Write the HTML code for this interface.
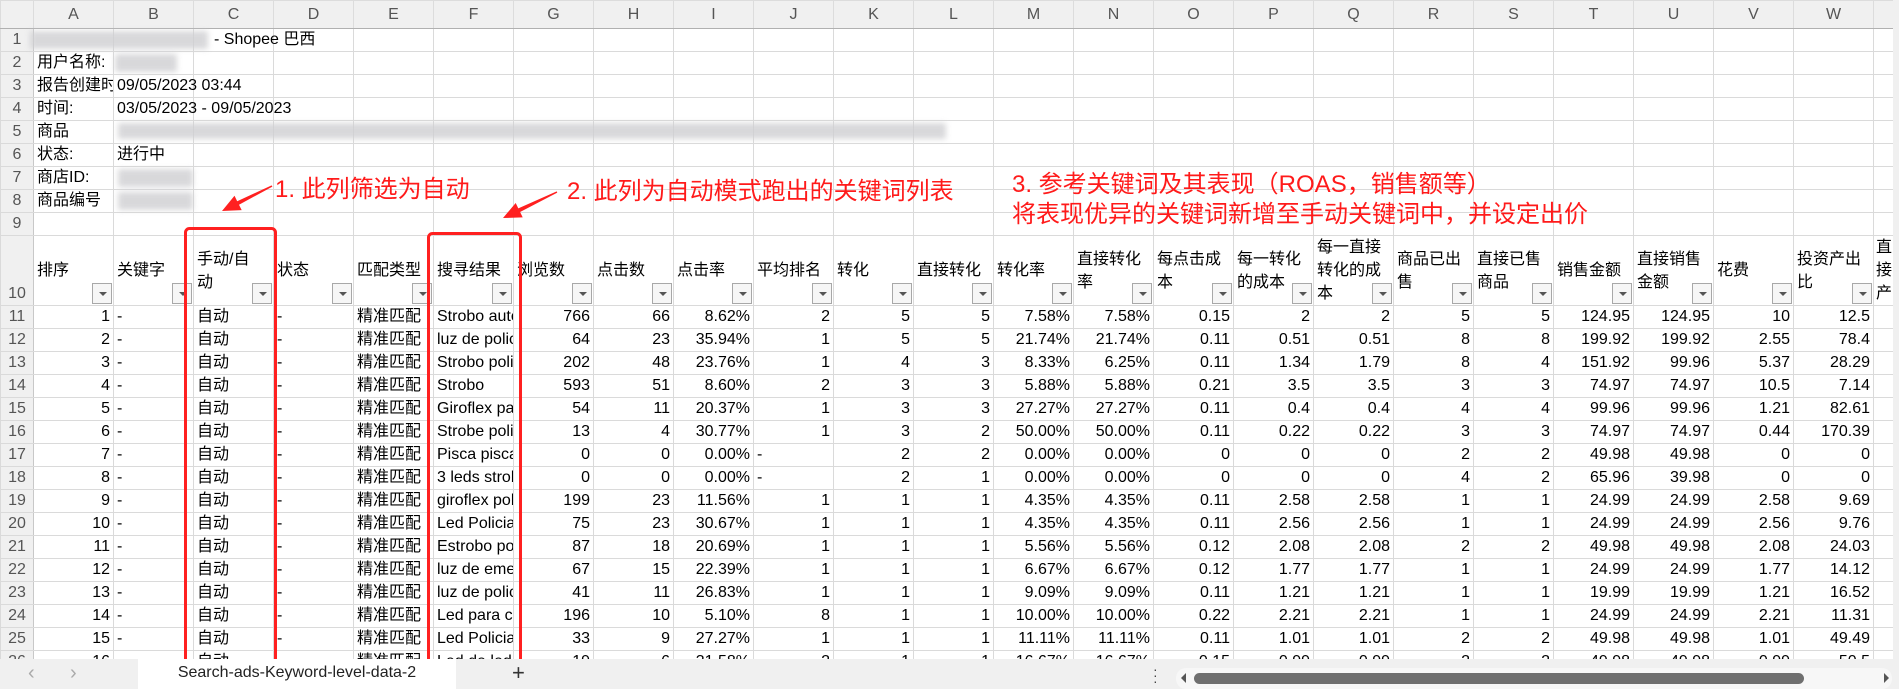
<!DOCTYPE html>
<html><head><meta charset="utf-8">
<style>
*{margin:0;padding:0;box-sizing:border-box}
body{width:1899px;height:689px;overflow:hidden;background:#fff;font-family:"Liberation Sans","Noto Sans CJK SC",sans-serif;font-size:16px;color:#000;position:relative}
table{border-collapse:collapse;table-layout:fixed;position:absolute;left:0;top:0;width:1893px}
td{border:1px solid #dadada;white-space:nowrap;overflow:hidden;padding:0 3px;height:23px;line-height:20px;vertical-align:middle}
tr.ch td{background:#f0f0f0;color:#555;text-align:center;font-size:16px;height:28px;border-color:#dcdcdc;border-bottom:1px solid #b0b0b0}
td.rh{background:#f0f0f0;color:#555;text-align:center;font-size:16px;padding:0;border-right:1px solid #c8c8c8}
td.r{text-align:right}
td.ov{overflow:visible}
tr.h10 td{height:68px;white-space:normal;line-height:23px;position:relative;vertical-align:middle;padding-right:3px;font-size:16px;word-break:break-all}
tr.h10 td.rh{vertical-align:bottom;padding:0}
.fb{position:absolute;right:1px;bottom:1px;width:20px;height:21px;background:#f6f6f6;border:1px solid #a8a8a8}
.fb:after{content:"";position:absolute;left:6px;top:8px;border-left:4px solid transparent;border-right:4px solid transparent;border-top:4px solid #555}
.blur{position:absolute;background:#cfcfd2;filter:blur(3px);opacity:.8}
.ann{position:absolute;color:#ff1a1a;font-size:24px;line-height:30px;white-space:nowrap;font-family:"Liberation Sans","Noto Sans CJK SC",sans-serif}
.tabbar{position:absolute;left:0;top:659px;width:1899px;height:30px;background:#f0f0f0}
.vs{position:absolute;left:1893px;top:0;width:6px;height:659px;background:#f0f0f0}
</style></head><body>
<table>
<colgroup><col style="width:33px"><col span="23" style="width:80px"><col style="width:20px"></colgroup>
<tr class="ch"><td style="background:#f0f0f0"></td><td>A</td><td>B</td><td>C</td><td>D</td><td>E</td><td>F</td><td>G</td><td>H</td><td>I</td><td>J</td><td>K</td><td>L</td><td>M</td><td>N</td><td>O</td><td>P</td><td>Q</td><td>R</td><td>S</td><td>T</td><td>U</td><td>V</td><td>W</td><td></td></tr>
<tr><td class="rh">1</td><td></td><td></td><td class="ov"></td><td></td><td></td><td></td><td></td><td></td><td></td><td></td><td></td><td></td><td></td><td></td><td></td><td></td><td></td><td></td><td></td><td></td><td></td><td></td><td></td><td></td></tr>
<tr><td class="rh">2</td><td>用户名称:</td><td></td><td></td><td></td><td></td><td></td><td></td><td></td><td></td><td></td><td></td><td></td><td></td><td></td><td></td><td></td><td></td><td></td><td></td><td></td><td></td><td></td><td></td><td></td></tr>
<tr><td class="rh">3</td><td>报告创建时间</td><td class="ov">09/05/2023 03:44</td><td></td><td></td><td></td><td></td><td></td><td></td><td></td><td></td><td></td><td></td><td></td><td></td><td></td><td></td><td></td><td></td><td></td><td></td><td></td><td></td><td></td><td></td></tr>
<tr><td class="rh">4</td><td>时间:</td><td class="ov">03/05/2023 - 09/05/2023</td><td></td><td></td><td></td><td></td><td></td><td></td><td></td><td></td><td></td><td></td><td></td><td></td><td></td><td></td><td></td><td></td><td></td><td></td><td></td><td></td><td></td><td></td></tr>
<tr><td class="rh">5</td><td>商品</td><td></td><td></td><td></td><td></td><td></td><td></td><td></td><td></td><td></td><td></td><td></td><td></td><td></td><td></td><td></td><td></td><td></td><td></td><td></td><td></td><td></td><td></td><td></td></tr>
<tr><td class="rh">6</td><td>状态:</td><td>进行中</td><td></td><td></td><td></td><td></td><td></td><td></td><td></td><td></td><td></td><td></td><td></td><td></td><td></td><td></td><td></td><td></td><td></td><td></td><td></td><td></td><td></td><td></td></tr>
<tr><td class="rh">7</td><td>商店ID:</td><td></td><td></td><td></td><td></td><td></td><td></td><td></td><td></td><td></td><td></td><td></td><td></td><td></td><td></td><td></td><td></td><td></td><td></td><td></td><td></td><td></td><td></td><td></td></tr>
<tr><td class="rh">8</td><td>商品编号</td><td></td><td></td><td></td><td></td><td></td><td></td><td></td><td></td><td></td><td></td><td></td><td></td><td></td><td></td><td></td><td></td><td></td><td></td><td></td><td></td><td></td><td></td><td></td></tr>
<tr><td class="rh">9</td><td></td><td></td><td></td><td></td><td></td><td></td><td></td><td></td><td></td><td></td><td></td><td></td><td></td><td></td><td></td><td></td><td></td><td></td><td></td><td></td><td></td><td></td><td></td><td></td></tr>
<tr class="h10"><td class="rh">10</td><td>排序<i class="fb"></i></td><td>关键字<i class="fb"></i></td><td>手动/自<br>动<i class="fb"></i></td><td>状态<i class="fb"></i></td><td style="white-space:nowrap;overflow:hidden">匹配类型<i class="fb"></i></td><td>搜寻结果<i class="fb"></i></td><td>浏览数<i class="fb"></i></td><td>点击数<i class="fb"></i></td><td>点击率<i class="fb"></i></td><td>平均排名<i class="fb"></i></td><td>转化<i class="fb"></i></td><td>直接转化<i class="fb"></i></td><td>转化率<i class="fb"></i></td><td>直接转化率<i class="fb"></i></td><td>每点击成本<i class="fb"></i></td><td>每一转化的成本<i class="fb"></i></td><td>每一直接转化的成本<i class="fb"></i></td><td>商品已出售<i class="fb"></i></td><td>直接已售商品<i class="fb"></i></td><td>销售金额<i class="fb"></i></td><td>直接销售金额<i class="fb"></i></td><td>花费<i class="fb"></i></td><td>投资产出比<i class="fb"></i></td><td style="padding:0 0 0 2px">直接产</td></tr>
<tr><td class="rh">11</td><td class="r">1</td><td>-</td><td>自动</td><td>-</td><td>精准匹配</td><td>Strobo automotivo</td><td class="r">766</td><td class="r">66</td><td class="r">8.62%</td><td class="r">2</td><td class="r">5</td><td class="r">5</td><td class="r">7.58%</td><td class="r">7.58%</td><td class="r">0.15</td><td class="r">2</td><td class="r">2</td><td class="r">5</td><td class="r">5</td><td class="r">124.95</td><td class="r">124.95</td><td class="r">10</td><td class="r">12.5</td><td></td></tr>
<tr><td class="rh">12</td><td class="r">2</td><td>-</td><td>自动</td><td>-</td><td>精准匹配</td><td>luz de policia</td><td class="r">64</td><td class="r">23</td><td class="r">35.94%</td><td class="r">1</td><td class="r">5</td><td class="r">5</td><td class="r">21.74%</td><td class="r">21.74%</td><td class="r">0.11</td><td class="r">0.51</td><td class="r">0.51</td><td class="r">8</td><td class="r">8</td><td class="r">199.92</td><td class="r">199.92</td><td class="r">2.55</td><td class="r">78.4</td><td></td></tr>
<tr><td class="rh">13</td><td class="r">3</td><td>-</td><td>自动</td><td>-</td><td>精准匹配</td><td>Strobo policia</td><td class="r">202</td><td class="r">48</td><td class="r">23.76%</td><td class="r">1</td><td class="r">4</td><td class="r">3</td><td class="r">8.33%</td><td class="r">6.25%</td><td class="r">0.11</td><td class="r">1.34</td><td class="r">1.79</td><td class="r">8</td><td class="r">4</td><td class="r">151.92</td><td class="r">99.96</td><td class="r">5.37</td><td class="r">28.29</td><td></td></tr>
<tr><td class="rh">14</td><td class="r">4</td><td>-</td><td>自动</td><td>-</td><td>精准匹配</td><td>Strobo</td><td class="r">593</td><td class="r">51</td><td class="r">8.60%</td><td class="r">2</td><td class="r">3</td><td class="r">3</td><td class="r">5.88%</td><td class="r">5.88%</td><td class="r">0.21</td><td class="r">3.5</td><td class="r">3.5</td><td class="r">3</td><td class="r">3</td><td class="r">74.97</td><td class="r">74.97</td><td class="r">10.5</td><td class="r">7.14</td><td></td></tr>
<tr><td class="rh">15</td><td class="r">5</td><td>-</td><td>自动</td><td>-</td><td>精准匹配</td><td>Giroflex para</td><td class="r">54</td><td class="r">11</td><td class="r">20.37%</td><td class="r">1</td><td class="r">3</td><td class="r">3</td><td class="r">27.27%</td><td class="r">27.27%</td><td class="r">0.11</td><td class="r">0.4</td><td class="r">0.4</td><td class="r">4</td><td class="r">4</td><td class="r">99.96</td><td class="r">99.96</td><td class="r">1.21</td><td class="r">82.61</td><td></td></tr>
<tr><td class="rh">16</td><td class="r">6</td><td>-</td><td>自动</td><td>-</td><td>精准匹配</td><td>Strobe policia</td><td class="r">13</td><td class="r">4</td><td class="r">30.77%</td><td class="r">1</td><td class="r">3</td><td class="r">2</td><td class="r">50.00%</td><td class="r">50.00%</td><td class="r">0.11</td><td class="r">0.22</td><td class="r">0.22</td><td class="r">3</td><td class="r">3</td><td class="r">74.97</td><td class="r">74.97</td><td class="r">0.44</td><td class="r">170.39</td><td></td></tr>
<tr><td class="rh">17</td><td class="r">7</td><td>-</td><td>自动</td><td>-</td><td>精准匹配</td><td>Pisca pisca</td><td class="r">0</td><td class="r">0</td><td class="r">0.00%</td><td>-</td><td class="r">2</td><td class="r">2</td><td class="r">0.00%</td><td class="r">0.00%</td><td class="r">0</td><td class="r">0</td><td class="r">0</td><td class="r">2</td><td class="r">2</td><td class="r">49.98</td><td class="r">49.98</td><td class="r">0</td><td class="r">0</td><td></td></tr>
<tr><td class="rh">18</td><td class="r">8</td><td>-</td><td>自动</td><td>-</td><td>精准匹配</td><td>3 leds strobo</td><td class="r">0</td><td class="r">0</td><td class="r">0.00%</td><td>-</td><td class="r">2</td><td class="r">1</td><td class="r">0.00%</td><td class="r">0.00%</td><td class="r">0</td><td class="r">0</td><td class="r">0</td><td class="r">4</td><td class="r">2</td><td class="r">65.96</td><td class="r">39.98</td><td class="r">0</td><td class="r">0</td><td></td></tr>
<tr><td class="rh">19</td><td class="r">9</td><td>-</td><td>自动</td><td>-</td><td>精准匹配</td><td>giroflex policia</td><td class="r">199</td><td class="r">23</td><td class="r">11.56%</td><td class="r">1</td><td class="r">1</td><td class="r">1</td><td class="r">4.35%</td><td class="r">4.35%</td><td class="r">0.11</td><td class="r">2.58</td><td class="r">2.58</td><td class="r">1</td><td class="r">1</td><td class="r">24.99</td><td class="r">24.99</td><td class="r">2.58</td><td class="r">9.69</td><td></td></tr>
<tr><td class="rh">20</td><td class="r">10</td><td>-</td><td>自动</td><td>-</td><td>精准匹配</td><td>Led Policia</td><td class="r">75</td><td class="r">23</td><td class="r">30.67%</td><td class="r">1</td><td class="r">1</td><td class="r">1</td><td class="r">4.35%</td><td class="r">4.35%</td><td class="r">0.11</td><td class="r">2.56</td><td class="r">2.56</td><td class="r">1</td><td class="r">1</td><td class="r">24.99</td><td class="r">24.99</td><td class="r">2.56</td><td class="r">9.76</td><td></td></tr>
<tr><td class="rh">21</td><td class="r">11</td><td>-</td><td>自动</td><td>-</td><td>精准匹配</td><td>Estrobo policia</td><td class="r">87</td><td class="r">18</td><td class="r">20.69%</td><td class="r">1</td><td class="r">1</td><td class="r">1</td><td class="r">5.56%</td><td class="r">5.56%</td><td class="r">0.12</td><td class="r">2.08</td><td class="r">2.08</td><td class="r">2</td><td class="r">2</td><td class="r">49.98</td><td class="r">49.98</td><td class="r">2.08</td><td class="r">24.03</td><td></td></tr>
<tr><td class="rh">22</td><td class="r">12</td><td>-</td><td>自动</td><td>-</td><td>精准匹配</td><td>luz de emergencia</td><td class="r">67</td><td class="r">15</td><td class="r">22.39%</td><td class="r">1</td><td class="r">1</td><td class="r">1</td><td class="r">6.67%</td><td class="r">6.67%</td><td class="r">0.12</td><td class="r">1.77</td><td class="r">1.77</td><td class="r">1</td><td class="r">1</td><td class="r">24.99</td><td class="r">24.99</td><td class="r">1.77</td><td class="r">14.12</td><td></td></tr>
<tr><td class="rh">23</td><td class="r">13</td><td>-</td><td>自动</td><td>-</td><td>精准匹配</td><td>luz de policia</td><td class="r">41</td><td class="r">11</td><td class="r">26.83%</td><td class="r">1</td><td class="r">1</td><td class="r">1</td><td class="r">9.09%</td><td class="r">9.09%</td><td class="r">0.11</td><td class="r">1.21</td><td class="r">1.21</td><td class="r">1</td><td class="r">1</td><td class="r">19.99</td><td class="r">19.99</td><td class="r">1.21</td><td class="r">16.52</td><td></td></tr>
<tr><td class="rh">24</td><td class="r">14</td><td>-</td><td>自动</td><td>-</td><td>精准匹配</td><td>Led para carro</td><td class="r">196</td><td class="r">10</td><td class="r">5.10%</td><td class="r">8</td><td class="r">1</td><td class="r">1</td><td class="r">10.00%</td><td class="r">10.00%</td><td class="r">0.22</td><td class="r">2.21</td><td class="r">2.21</td><td class="r">1</td><td class="r">1</td><td class="r">24.99</td><td class="r">24.99</td><td class="r">2.21</td><td class="r">11.31</td><td></td></tr>
<tr><td class="rh">25</td><td class="r">15</td><td>-</td><td>自动</td><td>-</td><td>精准匹配</td><td>Led Policia</td><td class="r">33</td><td class="r">9</td><td class="r">27.27%</td><td class="r">1</td><td class="r">1</td><td class="r">1</td><td class="r">11.11%</td><td class="r">11.11%</td><td class="r">0.11</td><td class="r">1.01</td><td class="r">1.01</td><td class="r">2</td><td class="r">2</td><td class="r">49.98</td><td class="r">49.98</td><td class="r">1.01</td><td class="r">49.49</td><td></td></tr>
<tr><td class="rh">26</td><td class="r">16</td><td>-</td><td>自动</td><td>-</td><td>精准匹配</td><td>Led de led</td><td class="r">19</td><td class="r">6</td><td class="r">31.58%</td><td class="r">2</td><td class="r">1</td><td class="r">1</td><td class="r">16.67%</td><td class="r">16.67%</td><td class="r">0.15</td><td class="r">0.99</td><td class="r">0.99</td><td class="r">2</td><td class="r">2</td><td class="r">49.98</td><td class="r">49.98</td><td class="r">0.99</td><td class="r">50.5</td><td></td></tr>
</table>

<div style="position:absolute;left:214px;top:29px;font-size:16px;line-height:22px;white-space:nowrap">- Shopee 巴西</div>
<div class="blur" style="left:30px;top:31px;width:178px;height:18px"></div>
<div class="blur" style="left:115px;top:54px;width:62px;height:18px"></div>
<div class="blur" style="left:118px;top:123px;width:828px;height:16px"></div>
<div class="blur" style="left:118px;top:169px;width:75px;height:18px"></div>
<div class="blur" style="left:118px;top:192px;width:75px;height:18px"></div>

<div class="ann" style="left:275px;top:175px">1. 此列筛选为自动</div>
<div class="ann" style="left:567px;top:177px">2. 此列为自动模式跑出的关键词列表</div>
<div class="ann" style="left:1012px;top:170px">3. 参考关键词及其表现（ROAS，销售额等）</div>
<div class="ann" style="left:1012px;top:200px">将表现优异的关键词新增至手动关键词中，并设定出价</div>

<svg style="position:absolute;left:0;top:0" width="1899" height="689">
<rect x="185.5" y="228.5" width="90" height="435" rx="4" fill="none" stroke="#ff2020" stroke-width="3"/>
<rect x="428.5" y="233.5" width="92" height="430" rx="4" fill="none" stroke="#ff2020" stroke-width="3"/>
<polygon points="272.4,186.6 239,204.7 241.7,210.1 222,211 234.5,195.8 237.2,201.2 271.6,185.4" fill="#ff2020"/>
<polygon points="557.3,192.6 520.1,212 522.7,217.4 503,218 515.7,203 518.3,208.4 556.7,191.4" fill="#ff2020"/>
</svg>

<div class="vs"></div>
<div class="tabbar">
  <div style="position:absolute;left:28px;top:3px;color:#aaa;font-size:20px">‹</div>
  <div style="position:absolute;left:70px;top:3px;color:#aaa;font-size:20px">›</div>
  <div style="position:absolute;left:138px;top:0;width:318px;height:30px;background:#fff;text-align:center;font-size:16px;line-height:28px;color:#222">Search-ads-Keyword-level-data-2</div>
  <div style="position:absolute;left:512px;top:1px;font-size:22px;color:#333">+</div>
  <div style="position:absolute;left:1153px;top:7px;font-size:14px;color:#444;line-height:6px">·<br>·<br>·</div>
  <div style="position:absolute;left:1176px;top:9px;width:716px;height:21px;background:#f7f7f7;border-radius:10px"></div>
  <div style="position:absolute;left:1181px;top:14px;width:0;height:0;border-top:5px solid transparent;border-bottom:5px solid transparent;border-right:5px solid #555"></div>
  <div style="position:absolute;left:1194px;top:14px;width:610px;height:11px;background:#6f6f6f;border-radius:6px"></div>
  <div style="position:absolute;left:1884px;top:14px;width:0;height:0;border-top:5px solid transparent;border-bottom:5px solid transparent;border-left:5px solid #555"></div>
</div>
</body></html>
